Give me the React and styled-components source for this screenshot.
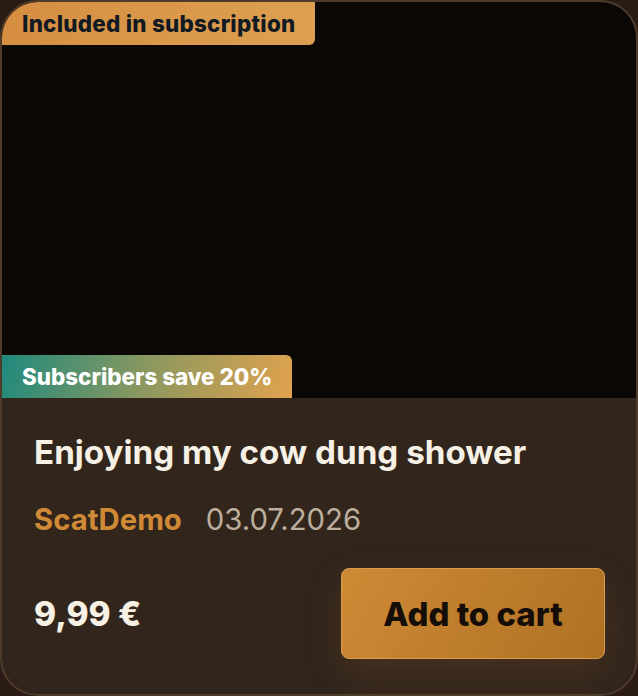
import React from "react";
import styled, { createGlobalStyle } from "styled-components";

const Global = createGlobalStyle`
  html, body { margin: 0; padding: 0; background: #2a1c14; }
  * { box-sizing: border-box; }
`;

const Card = styled.div`
  position: relative;
  width: 638px;
  height: 696px;
  border: 2px solid #4e3b2a;
  border-radius: 38px;
  overflow: hidden;
  background: #31251c;
  display: flex;
  flex-direction: column;
  font-family: Inter, "Noto Sans", sans-serif;
`;

const Media = styled.div`
  position: relative;
  height: 396px;
  flex: none;
  background: #0c0805;
`;

const Badge = styled.div`
  position: absolute;
  left: 0;
  display: flex;
  align-items: center;
  padding-left: 20px;
  font-weight: 800;
  font-size: 22.4px;
`;

const TopBadge = styled(Badge)`
  top: 0;
  width: 313px;
  height: 43px;
  background: linear-gradient(100deg, #d68e41 0%, #dda052 100%);
  color: #111a22;
  letter-spacing: 0.25px;
  border-bottom-right-radius: 6px;
`;

const SaveBadge = styled(Badge)`
  bottom: 0;
  width: 290px;
  height: 43px;
  background: linear-gradient(105deg, #1f8a7d 0%, #8c985f 50%, #e1a24e 100%);
  color: #ffffff;
  border-top-right-radius: 6px;
`;

const Body = styled.div`
  flex: 1;
  display: flex;
  flex-direction: column;
  padding: 34px 31px 0 32px;
`;

const Title = styled.h2`
  margin: 0;
  font-size: 33.2px;
  line-height: 40px;
  font-weight: 700;
  color: #f6f0e5;
`;

const Meta = styled.div`
  display: flex;
  gap: 24px;
  margin-top: 30px;
  font-size: 29.3px;
  line-height: 36px;
`;

const Author = styled.span`
  color: #d08a36;
  font-weight: 700;
`;

const DateText = styled.span`
  color: #bcae9d;
  font-weight: 400;
`;

const Footer = styled.div`
  display: flex;
  align-items: center;
  justify-content: space-between;
  margin-top: 30px;
`;

const Price = styled.span`
  font-size: 33.5px;
  font-weight: 800;
  color: #f6f0e5;
`;

const CartButton = styled.button`
  width: 264px;
  height: 91px;
  border: 1px solid #d99c4c;
  border-radius: 8px;
  background: linear-gradient(120deg, #cf8a35 0%, #ae7124 100%);
  box-shadow: 0 14px 40px rgba(190, 120, 50, 0.16);
  color: #150e08;
  font-family: Inter, "Noto Sans", sans-serif;
  font-size: 32.9px;
  font-weight: 800;
  cursor: pointer;
`;

export default function App() {
  return (
    <>
      <Global />
      <Card>
        <Media>
          <TopBadge>Included in subscription</TopBadge>
          <SaveBadge>Subscribers save 20%</SaveBadge>
        </Media>
        <Body>
          <Title>Enjoying my cow dung shower</Title>
          <Meta>
            <Author>ScatDemo</Author>
            <DateText>03.07.2026</DateText>
          </Meta>
          <Footer>
            <Price>9,99 €</Price>
            <CartButton>Add to cart</CartButton>
          </Footer>
        </Body>
      </Card>
    </>
  );
}
